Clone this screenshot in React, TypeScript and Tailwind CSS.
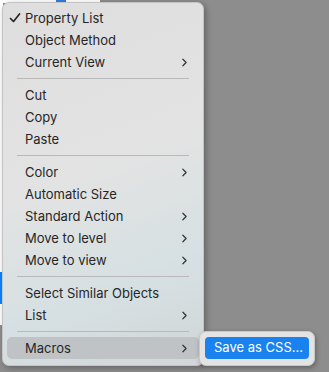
import { ChevronRight } from "lucide-react";

type Item = { label: string; checked?: boolean; sub?: boolean; active?: boolean } | "sep";

const items: Item[] = [
  { label: "Property List", checked: true },
  { label: "Object Method" },
  { label: "Current View", sub: true },
  "sep",
  { label: "Cut" },
  { label: "Copy" },
  { label: "Paste" },
  "sep",
  { label: "Color", sub: true },
  { label: "Automatic Size" },
  { label: "Standard Action", sub: true },
  { label: "Move to level", sub: true },
  { label: "Move to view", sub: true },
  "sep",
  { label: "Select Similar Objects" },
  { label: "List", sub: true },
  "sep",
  { label: "Macros", sub: true, active: true },
];

function Check() {
  return (
    <svg width="12" height="12" viewBox="0 0 12 12" className="text-[#262626]">
      <path d="M1.5 6.5 L4.5 9.5 L10.5 2" fill="none" stroke="currentColor" strokeWidth="1.7" strokeLinecap="round" strokeLinejoin="round" />
    </svg>
  );
}

export default function App() {
  return (
    <div
      className="relative w-[329px] h-[372px] overflow-hidden bg-[#8d8d8d]"
      style={{ fontFamily: "Inter, 'Liberation Sans', sans-serif" }}
    >
      {/* things behind the menu */}
      <div className="absolute left-0 top-0 w-[100px] h-[3px] bg-white" />
      <div className="absolute left-[56px] top-0 w-[10px] h-[3px] bg-[#2f7de1]" />
      <div className="absolute left-0 top-0 w-[3px] h-[325px] bg-white" />
      <div className="absolute left-0 top-[272px] w-[3px] h-[32px] bg-[#0a84ff]" />

      {/* context menu */}
      <div className="absolute left-[2px] top-[2px] w-[202px] h-[364px] rounded-[7px] bg-[linear-gradient(160deg,#dedede_0%,#e3e3e3_45%,#d6e0e2_75%,#d2d6d8_100%)] shadow-[2px_2px_6px_rgba(0,0,0,0.3)] border border-[#c4c4c4] px-[4px] pt-[4px] text-[13px] text-[#262626]">
        {items.map((it, i) =>
          it === "sep" ? (
            <div key={i} className="mx-[10px] my-[5px] h-px bg-[#b9b9b9]" />
          ) : (
            <div
              key={i}
              className={`flex items-center h-[22px] pl-[2px] pr-[8px] rounded-[5px] ${it.active ? "bg-[#bfc3c6]" : ""}`}
            >
              <span className="w-[16px] flex items-center">{it.checked ? <Check /> : null}</span>
              <span className="flex-1 leading-none">{it.label}</span>
              {it.sub ? <ChevronRight size={13} strokeWidth={2.2} className="text-[#333]" /> : null}
            </div>
          )
        )}
      </div>

      {/* submenu */}
      <div className="absolute left-[199px] top-[331px] w-[116px] h-[35px] rounded-[7px] bg-[#e3e3e3] border border-[#c8c8c8] shadow-[1px_2px_5px_rgba(0,0,0,0.3)] p-[5px]">
        <div className="h-[22px] rounded-[4px] bg-[#1a82ee] text-white text-[13px] flex items-center pl-[9px]">
          Save as CSS...
        </div>
      </div>
    </div>
  );
}
